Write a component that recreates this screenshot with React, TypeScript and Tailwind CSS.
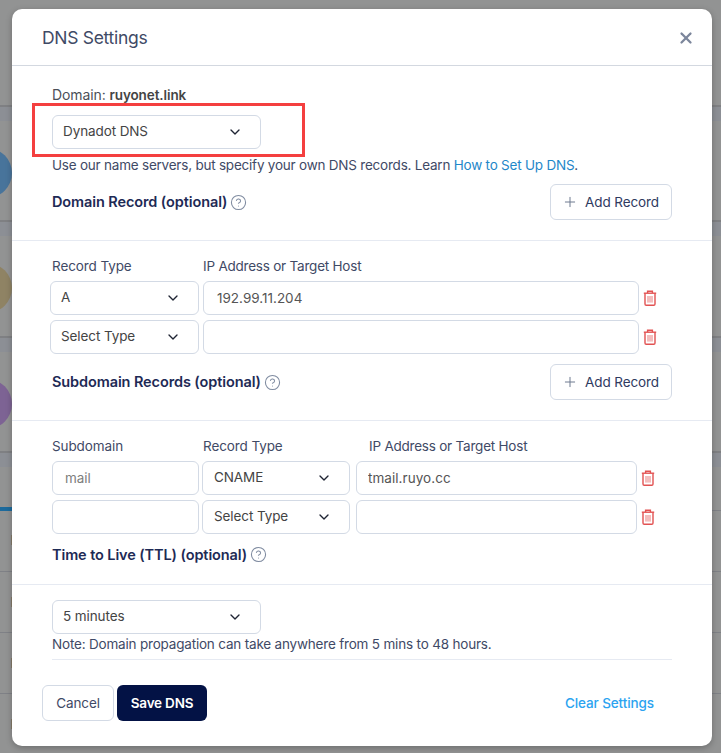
import { ChevronDown, CircleHelp, Plus, X } from "lucide-react";

function Trash() {
  return (
    <svg width="14" height="16" viewBox="0 0 14 16" fill="none" stroke="#e25252" strokeWidth="1.4" className="shrink-0">
      <path d="M0.8 3.2H13.2" />
      <path d="M4.6 3V1.2H9.4V3" />
      <path d="M2 3.2V14a1.2 1.2 0 0 0 1.2 1.2h7.6A1.2 1.2 0 0 0 12 14V3.2" />
      <path d="M5 6V12.6M7 6V12.6M9 6V12.6" strokeWidth="1" opacity="0.75" />
    </svg>
  );
}

function Select({ label, className }: { label: string; className: string }) {
  return (
    <div className={`flex h-[34px] shrink-0 items-center justify-between rounded-[6px] border border-[#d3dae5] bg-white text-[13.5px] text-[#444] ${className}`}>
      <span className="relative -top-px">{label}</span>
      <ChevronDown size={16} strokeWidth={2} className="text-[#1f2433]" />
    </div>
  );
}

function Field({ value, placeholder, className }: { value?: string; placeholder?: string; className: string }) {
  return (
    <input
      readOnly
      value={value ?? ""}
      placeholder={placeholder}
      className={`h-[34px] shrink-0 rounded-[6px] border border-[#d3dae5] bg-white text-[13.5px] text-[#555] outline-none placeholder:text-[#7d7d7d] ${className}`}
    />
  );
}

function Heading({ children }: { children: string }) {
  return (
    <div className="flex items-center gap-[3px]">
      <span className="text-[14.5px] font-semibold text-[#1e2a55]">{children}</span>
      <CircleHelp size={17} strokeWidth={1.5} className="text-[#7f8ba0]" />
    </div>
  );
}

function AddRecord() {
  return (
    <div className="flex h-[36px] w-[122px] items-center rounded-[6px] border border-[#d3dae5] bg-white pl-[11px] text-[13.5px] text-[#2f3a5f]">
      <Plus size={16} strokeWidth={1.5} className="mr-[7px] text-[#6f7a90]" />
      Add Record
    </div>
  );
}

function BackgroundRow({ circle }: { circle: string }) {
  return (
    <div className="h-[115.33px] border-t-2 border-[#7f8083]">
      <div className="h-[14px] bg-[#8c8f95]" />
      <div className={`mt-[27px] -ml-[38px] h-[50px] w-[50px] rounded-full ${circle}`} />
    </div>
  );
}

function BackgroundLine({ mark }: { mark: boolean }) {
  return (
    <div className="h-[61px] border-t border-[#7f8186] pt-[25px] pl-[11px]">
      {mark && <div className="h-[10px] w-[2px] bg-[#857b69]" />}
    </div>
  );
}

export default function App() {
  return (
    <div className="relative h-[753px] w-[721px] overflow-hidden bg-[#929393] font-['Inter',sans-serif] tracking-[-0.1px]">
      <div className="pt-[105px]">
        <BackgroundRow circle="bg-[#48749b]" />
        <BackgroundRow circle="bg-[#8f8364]" />
        <BackgroundRow circle="bg-[#7d6394]" />
        <div className="h-[56px] border-t-2 border-[#7f8083]">
          <div className="h-[14px] bg-[#8c8f95]" />
        </div>
        <div className="flex h-[4px]">
          <div className="w-[12px] bg-[#1d6a9c]" />
          <div className="flex-1 border-b border-[#7f8186]" />
        </div>
        <div className="h-[60px] pt-[24px] pl-[11px]">
          <div className="h-[10px] w-[2px] bg-[#857b69]" />
        </div>
        <BackgroundLine mark />
        <BackgroundLine mark />
        <BackgroundLine mark />
      </div>

      <div className="absolute top-[9px] left-[12px] h-[737px] w-[700px] rounded-[10px] bg-white shadow-[0_2px_6px_rgba(0,0,0,0.25)]">
        <header className="flex h-[57px] items-center justify-between border-b border-[#d3d8e0] pr-[17px] pl-[30px]">
          <h2 className="relative top-px text-[17.5px] font-normal tracking-[-0.3px] text-[#3f4a66]">DNS Settings</h2>
          <X size={18} strokeWidth={3} className="relative top-px text-[#7c869b]" />
        </header>

        <section className="relative border-b border-[#e6eaf2] px-[40px] pt-[19px] pb-[20px]">
          <div className="h-[20px] text-[14px] leading-[20px] text-[#4b4f58]">
            Domain: <span className="text-[13.5px] font-semibold text-[#444]">ruyonet.link</span>
          </div>
          <Select label="Dynadot DNS" className="mt-[10px] w-[209px] pr-[17px] pl-[10px]" />
          <p className="mt-[6px] h-[20px] text-[13.5px] leading-[20px] tracking-[-0.22px] whitespace-nowrap text-[#3f4a66]">
            Use our name servers, but specify your own DNS records. Learn <span className="text-[#1f87c9]">How to Set Up DNS</span>.
          </p>
          <div className="mt-[9px] flex items-center justify-between">
            <Heading>Domain Record (optional)</Heading>
            <AddRecord />
          </div>
          <div className="absolute top-[37px] left-[20px] h-[54px] w-[273px] border-[3px] border-[#f43f3f]" />
        </section>

        <section className="border-b border-[#e6eaf2] px-[40px] pt-[15px] pb-[20px]">
          <div className="flex h-[20px] items-center text-[13.5px] text-[#3f4a66]">
            <span className="w-[151px]">Record Type</span>
            <span className="tracking-[-0.22px]">IP Address or Target Host</span>
          </div>
          <div className="mt-[5px] -ml-[2px] flex items-center gap-[4px]">
            <Select label="A" className="w-[149px] pr-[17px] pl-[10px]" />
            <Field value="192.99.11.204" className="w-[436px] pl-[13px] tracking-normal" />
            <Trash />
          </div>
          <div className="mt-[5px] -ml-[2px] flex items-center gap-[4px]">
            <Select label="Select Type" className="w-[149px] pr-[17px] pl-[10px]" />
            <Field className="w-[436px] pl-[14px]" />
            <Trash />
          </div>
          <div className="mt-[10px] flex items-center justify-between">
            <Heading>Subdomain Records (optional)</Heading>
            <AddRecord />
          </div>
        </section>

        <section className="border-b border-[#e6eaf2] px-[40px] pt-[15px] pb-[20px]">
          <div className="flex h-[20px] items-center text-[13.5px] text-[#3f4a66]">
            <span className="w-[151px]">Subdomain</span>
            <span className="w-[166px]">Record Type</span>
            <span className="tracking-[-0.22px]">IP Address or Target Host</span>
          </div>
          <div className="mt-[5px] flex items-center">
            <Field placeholder="mail" className="w-[147px] pl-[12px]" />
            <Select label="CNAME" className="ml-[3px] w-[148px] pr-[17px] pl-[11px]" />
            <Field value="tmail.ruyo.cc" className="ml-[6px] w-[281px] pl-[11px] tracking-[0.05px]" />
            <span className="ml-[4px]"><Trash /></span>
          </div>
          <div className="mt-[5px] flex items-center">
            <Field className="w-[147px] pl-[12px]" />
            <Select label="Select Type" className="ml-[3px] w-[148px] pr-[17px] pl-[11px]" />
            <Field className="ml-[6px] w-[281px] pl-[8px]" />
            <span className="ml-[4px]"><Trash /></span>
          </div>
          <div className="mt-[10px] h-[20px]">
            <Heading>Time to Live (TTL) (optional)</Heading>
          </div>
        </section>

        <section className="px-[40px] pt-[15px]">
          <Select label="5 minutes" className="w-[209px] pr-[17px] pl-[10px]" />
          <p className="h-[20px] text-[13.5px] leading-[20px] tracking-[-0.19px] text-[#3f4a66]">
            Note: Domain propagation can take anywhere from 5 mins to 48 hours.
          </p>
          <div className="mt-[5px] h-px bg-[#e6eaf2]" />
          <div className="mt-[25px] -ml-[10px] flex items-center">
            <div className="flex h-[36px] w-[72px] items-center justify-center rounded-[6px] border border-[#d3dae5] text-[13.5px] text-[#3f4a66]">
              Cancel
            </div>
            <div className="ml-[3px] flex h-[36px] w-[90px] items-center justify-center rounded-[6px] bg-[#031245] text-[13.5px] font-semibold tracking-[-0.2px] text-white">
              Save DNS
            </div>
            <span className="mr-[18px] ml-auto text-[13.5px] font-medium text-[#2ba3f0]">Clear Settings</span>
          </div>
        </section>
      </div>
    </div>
  );
}
